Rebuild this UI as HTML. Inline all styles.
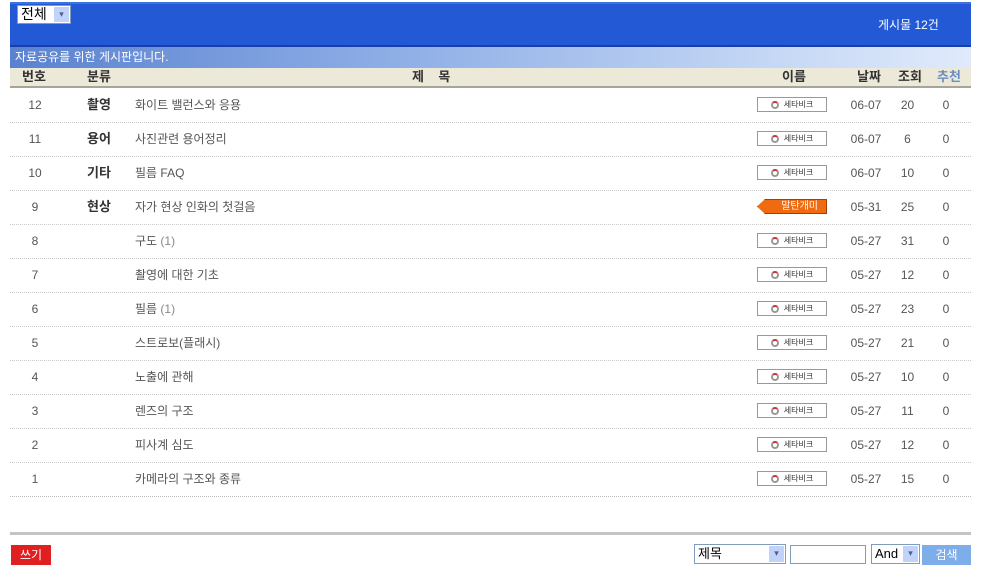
<!DOCTYPE html>
<html><head><meta charset="utf-8"><style>
body{margin:0;width:985px;height:574px;background:#fff;font-family:"Liberation Sans","Noto Sans CJK KR","NanumGothic",sans-serif;font-size:12px;color:#555;position:relative;overflow:hidden}
.a{position:absolute}
.hdr{left:10px;top:2px;width:961px;height:43px;background:#2459d6;border-top:2px solid #3a74e0;box-sizing:border-box}
.sel{left:17px;top:5px;width:54px;height:19px;background:#fff;border:1px solid #7f9db9;box-sizing:border-box;font-size:14px;color:#000;padding-left:3px;line-height:17px}
.arr{position:absolute;right:1px;top:1px;width:15px;height:15px;background:#c1d3fb;color:#4d6185;font-size:9px;text-align:center;line-height:15px}
.sub{left:10px;top:45px;width:961px;height:23px;border-top:2px solid #1a3ea8;box-sizing:border-box;background:linear-gradient(90deg,#5a82d0,#8eaee6 40%,#c6d8f5 80%,#e0eafb);color:#fff;font-size:12px;line-height:21px;padding-left:5px}
.th{left:10px;top:68px;width:961px;height:20px;background:#ece9d8;border-bottom:2px solid #a8a49a;box-sizing:border-box;font-weight:bold;color:#333;font-size:13px}
.th span{position:absolute;top:0;line-height:18px}
.row{left:10px;width:961px;height:34px;border-bottom:1px dotted #c8c8c8;box-sizing:border-box}
.row>span{position:absolute;top:8px;line-height:16px;height:16px}
.c{text-align:center}
.badge{position:absolute;left:747px;top:8px;width:70px;height:15px;border:1px solid #999;box-sizing:border-box;background:#fff;font-size:8px;color:#333;text-align:center;line-height:13px}
.badge i{display:inline-block;width:8px;height:8px;border:2px solid #999;border-top-color:#c33;border-radius:50%;vertical-align:middle;margin-right:5px;box-sizing:border-box}
.org{position:absolute;left:747px;top:8px;width:70px;height:15px;background:#f06a10;border:1px solid #a04008;box-sizing:border-box;color:#fff;font-size:10px;text-align:right;padding-right:8px;line-height:13px;clip-path:polygon(8px 0,100% 0,100% 100%,8px 100%,0 50%)}
</style></head><body>
<div class="a hdr"></div>
<div class="a sel">전체<div class="arr">▾</div></div>
<div class="a" style="left:878px;top:16px;color:#fff;font-size:12px">게시물 12건</div>
<div class="a sub">자료공유를 위한 게시판입니다.</div>
<div class="a th">
<span style="left:12px">번호</span><span style="left:77px">분류</span><span style="left:402px">제 &nbsp; &nbsp;목</span>
<span style="left:772px">이름</span><span style="left:847px">날짜</span><span style="left:888px">조회</span><span style="left:927px;color:#6d8fc0">추천</span></div>
<div id="rows"></div>
<script>
var d=[[12,"촬영","화이트 밸런스와 응용","06-07",20],[11,"용어","사진관련 용어정리","06-07",6],[10,"기타","필름 FAQ","06-07",10],[9,"현상","자가 현상 인화의 첫걸음","05-31",25],[8,"","구도 <i style='font-style:normal;color:#888'>(1)</i>","05-27",31],[7,"","촬영에 대한 기초","05-27",12],[6,"","필름 <i style='font-style:normal;color:#888'>(1)</i>","05-27",23],[5,"","스트로보(플래시)","05-27",21],[4,"","노출에 관해","05-27",10],[3,"","렌즈의 구조","05-27",11],[2,"","피사계 심도","05-27",12],[1,"","카메라의 구조와 종류","05-27",15]];
var h="";d.forEach(function(r,i){var t=89+i*34;
h+='<div class="a row" style="top:'+t+'px"><span class="c" style="left:10px;width:30px">'+r[0]+'</span><span style="left:77px;font-weight:bold;color:#333;font-size:13px">'+r[1]+'</span><span style="left:125px">'+r[2]+'</span>'+(r[0]==9?'<div class="org">말탄개미</div>':'<div class="badge"><i></i>세타비크</div>')+'<span class="c" style="left:836px;width:40px">'+r[3]+'</span><span class="c" style="left:885px;width:25px">'+r[4]+'</span><span class="c" style="left:926px;width:20px">0</span></div>';});
document.getElementById("rows").innerHTML=h;
</script>
<div class="a" style="left:10px;top:496px;width:961px;height:2px;border-top:1px dotted #bbb"></div>
<div class="a" style="left:10px;top:532px;width:961px;height:3px;background:#c4c4c4"></div>
<div class="a" style="left:11px;top:545px;width:40px;height:20px;background:#e02020;color:#fff;font-size:12px;text-align:center;line-height:20px">쓰기</div>
<div class="a sel" style="left:694px;top:544px;width:92px;height:20px;font-size:13px">제목<div class="arr" style="height:16px">▾</div></div>
<div class="a" style="left:790px;top:545px;width:76px;height:19px;border:1px solid #7f9db9;box-sizing:border-box"></div>
<div class="a sel" style="left:871px;top:544px;width:49px;height:20px;font-size:13px">And<div class="arr" style="height:16px">▾</div></div>
<div class="a" style="left:922px;top:545px;width:49px;height:20px;background:#7eaeea;color:#fff;text-align:center;line-height:20px;font-size:12px">검색</div>
</body></html>
